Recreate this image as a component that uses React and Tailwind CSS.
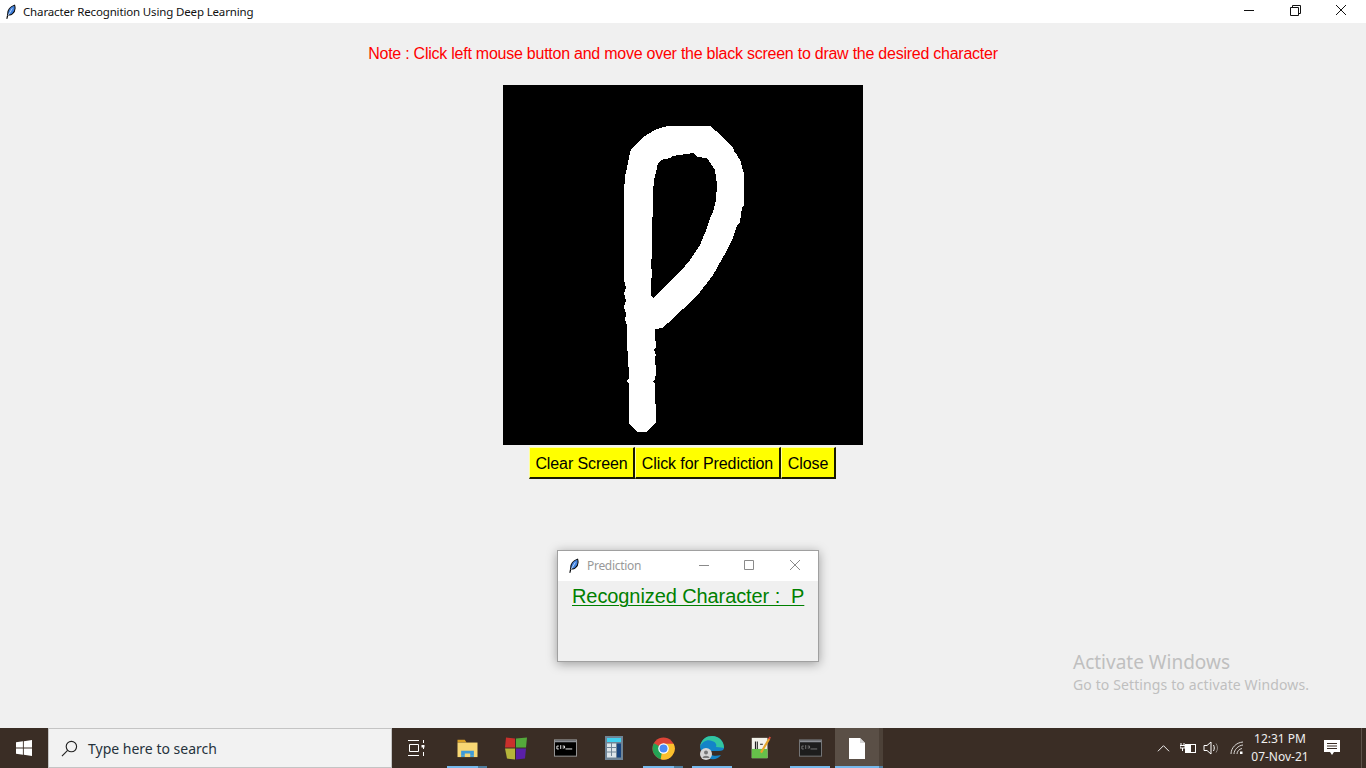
import React from "react";

const Feather = ({ className }) => (
  <svg viewBox="0 0 12 16" className={className}>
    <path d="M2 15.5 L3 10 C3 6 5.5 2 10.5 0.5 C11.5 4 10.5 8 8 10 C6.5 11.2 5 11.5 3.2 11 Z" fill="#3f80dc" stroke="#000" strokeWidth="1.1" />
    <path d="M3.2 12 L8 4" stroke="#d4e6ff" strokeWidth="0.9" fill="none" />
  </svg>
);

const Stroke = () => (
  <svg viewBox="0 0 360 360" className="block w-[360px] h-[360px]" shapeRendering="crispEdges">
    <path
      fillRule="evenodd"
      fill="#fff"
      transform="translate(-503 -85)"
      d="M663 127 L668 126 L710 126 L716 131 L733 147 L735 153 L737 155 L741 162 L742 167 L744 173 L744 205 L742 208 L740 222 L737 226 L733 238 L726 252 L713 275 L697 296 L668 323 L662 328 L655 329 L655 335 L656 347 L654 349 L656 355 L655 358 L656 372 L655 380 L653 381 L655 384 L656 422 L647 432 L637 432 L629 423 L629 384 L627 381 L629 378 L628 355 L627 347 L627 325 L625 320 L626 314 L624 307 L626 301 L624 293 L626 288 L624 280 L624 192 L625 176 L627 168 L630 152 L632 148 L643 137 L655 130 Z
      M658 163 L661 160 L670 158 L672 156 L693 153 L697 157 L707 158 L711 164 L715 170 L717 185 L716 200 L713 212 L711 216 L707 228 L700 245 L690 260 L680 272 L653 298 L651 295 L651 281 L652 276 L651 262 L652 256 L652 222 L653 212 L653 192 L654 180 L656 172 Z"
    />
  </svg>
);

const Explorer = () => (
  <svg viewBox="0 0 24 22" className="w-[23px] h-[20px]">
    <path d="M1 2 H9 L11 5 H1 Z" fill="#d9a126" />
    <path d="M1 5 H23 V21 H1 Z" fill="#f7d774" />
    <path d="M5 19 V14 H19 V19 H15 V17 H9 V19 Z" fill="#3e9bd9" />
    <path d="M5 19 H9 V21 H5 Z M15 19 H19 V21 H15 Z" fill="#3e9bd9" />
  </svg>
);

const Store = () => (
  <svg viewBox="0 0 24 24" className="w-[24px] h-[25px]">
    <path d="M2 1 L11 2 L11 11 L1 11 Z" fill="#c9302c" />
    <path d="M12 2 L23 1 L22 11 L12 11 Z" fill="#54a83c" />
    <path d="M1 12 L11 12 L11 23 L3 22 Z" fill="#b5b53a" />
    <path d="M12 12 L22 12 L21 22 L12 23 Z" fill="#5a20a8" />
  </svg>
);

const Cmd = ({ dim }) => (
  <svg viewBox="0 0 24 18" className="w-[23px] h-[18px]">
    <rect x="0.5" y="0.5" width="23" height="17" fill={dim ? "#1d1d1d" : "#000"} stroke={dim ? "#77787a" : "#9a9a9a"} />
    <rect x="1" y="1" width="22" height="2" fill="#8d9096" />
    <path d="M3 7 H5 M3 7 V10 H5 M7 6 V10 M9 7 H11 V9 H9" stroke={dim ? "#777" : "#eee"} strokeWidth="1" fill="none" />
    <path d="M12 10 H19" stroke={dim ? "#777" : "#eee"} strokeWidth="1" />
  </svg>
);

const Calc = () => (
  <svg viewBox="0 0 18 24" className="w-[18px] h-[24px]">
    <rect width="18" height="24" fill="#6f8496" />
    <rect x="2" y="2" width="14" height="4" fill="#42d0f0" />
    {[7.5, 12, 16.5].map((y) =>
      [2, 7].map((x) => <rect key={`${x}-${y}`} x={x} y={y} width="4" height="3.5" fill="#dde5ea" />)
    )}
    <rect x="12" y="7.5" width="4" height="14" fill="#17447f" />
    <rect x="2" y="20" width="9" height="1.5" fill="#dde5ea" />
  </svg>
);

const Chrome = () => (
  <svg viewBox="0 0 24 24" className="w-[23px] h-[23px]">
    <circle cx="12" cy="12" r="11.5" fill="#dc4437" />
    <path d="M12 12 L2 6.5 A11.5 11.5 0 0 0 9 23.1 Z" fill="#23a455" />
    <path d="M12 7 H22.6 A11.5 11.5 0 0 1 9 23.1 Z" fill="#fbc02d" />
    <circle cx="12" cy="12" r="5.5" fill="#fff" />
    <circle cx="12" cy="12" r="4.2" fill="#4b8bf5" />
  </svg>
);

const Edge = () => (
  <svg viewBox="0 0 26 26" className="w-[26px] h-[26px]">
    <path d="M1 12 C2 4 8 1 13 1 C20 1 25 6 25 13 C25 15 23 16 20 16 H10 C10 20 15 22 22 20 C19 24 15 25 12 24 C6 23 2 18 1 12 Z" fill="#1384c8" />
    <path d="M1 12 C3 6 9 4 13 6 C17 7 18 10 17 12 C21 12 24 13 25 13 C25 6 20 1 13 1 C8 1 2 4 1 12 Z" fill="#32c6a0" />
    <circle cx="7" cy="19" r="6" fill="#d5d5d5" />
    <circle cx="7" cy="17.5" r="2" fill="#777" />
    <path d="M3.5 23 C4 20 10 20 10.5 23 Z" fill="#777" />
  </svg>
);

const Notepad = () => (
  <svg viewBox="0 0 22 26" className="w-[22px] h-[24px]">
    <rect x="1" y="2" width="17" height="22" fill="#f2f2ea" />
    <rect x="1" y="14" width="17" height="10" fill="#66c04a" />
    <path d="M5 6 V14 M7 6 V14 M10 9 H13" stroke="#222" strokeWidth="1.2" />
    <path d="M11 18 L20 3" stroke="#e6a52a" strokeWidth="2.4" />
    <path d="M19.5 3.5 L21 1" stroke="#d8483a" strokeWidth="2" />
  </svg>
);

const Doc = () => (
  <svg viewBox="0 0 16 21" className="w-[16px] h-[21px]">
    <path d="M0 0 H11 L16 5 V21 H0 Z" fill="#fff" />
    <path d="M11 0 V5 H16" fill="#d8d8d8" />
  </svg>
);

const slots = [
  { el: <Explorer />, line: "w-[31px]", extra: "w-[9px]" },
  { el: <Store /> },
  { el: <Cmd /> },
  { el: <Calc /> },
  { el: <Chrome />, line: "w-[31px]", extra: "w-[9px]" },
  { el: <Edge />, line: "w-[40px]" },
  { el: <Notepad /> },
  { el: <Cmd dim />, line: "w-[40px]" },
];

const btn = "bg-[#ffff00] pt-[2px] tracking-[-0.1px] border-t border-l border-r-2 border-b-2 border-t-[#ffffa0] border-l-[#ffffa0] border-r-[#1a1a00] border-b-[#1a1a00]";

export default function App() {
  return (
    <div className="relative flex flex-col w-[1366px] h-[768px] overflow-hidden bg-[#f0f0f0] font-['Liberation_Sans',sans-serif]">
      {/* Title bar */}
      <div className="flex items-center h-[23px] bg-white shrink-0">
        <Feather className="w-[11px] h-[16px] ml-[5px] mr-[7px]" />
        <span className="text-[11.5px] tracking-[-0.15px] text-[#111] font-['Noto_Sans',sans-serif]">Character Recognition Using Deep Learning</span>
        <div className="ml-auto mr-[2px] flex items-center h-full">
          <svg viewBox="0 0 46 23" className="w-[46px] h-[23px]"><path d="M0 10.5 H10" transform="translate(18 0)" stroke="#111" /></svg>
          <svg viewBox="0 0 46 23" className="w-[46px] h-[23px]" fill="none" stroke="#111"><path d="M18.5 7.5 H26.5 V15.5 H18.5 Z M20.5 7 V5.5 H28.5 V13.5 H27" /></svg>
          <svg viewBox="0 0 46 23" className="w-[46px] h-[23px]" fill="none" stroke="#111"><path d="M18 5 L28 15 M28 5 L18 15" /></svg>
        </div>
      </div>

      {/* Main */}
      <div className="flex-1 flex flex-col items-center bg-[#f0f0f0]">
        <p className="mt-[21px] h-[19px] leading-[19px] text-[16px] tracking-[-0.245px] text-[#ff0000]">
          Note : Click left mouse button and move over the black screen to draw the desired character
        </p>
        <div className="mt-[22px] w-[360px] h-[360px] bg-black">
          <Stroke />
        </div>
        <div className="mt-[2px] -ml-px flex h-[32px] text-[16px] text-black">
          <button className={`w-[106px] ${btn}`}>Clear Screen</button>
          <button className={`w-[146px] ${btn}`}>Click for Prediction</button>
          <button className={`w-[55px] ${btn}`}>Close</button>
        </div>
      </div>

      {/* Prediction window */}
      <div className="absolute left-[557px] top-[550px] w-[262px] h-[112px] border border-[#a0a0a0] bg-[#f0f0f0] shadow-[0_2px_10px_rgba(0,0,0,0.35)]">
        <div className="flex items-center h-[30px] bg-white">
          <Feather className="w-[11px] h-[16px] ml-[10px] mr-[8px]" />
          <span className="text-[12px] tracking-[-0.3px] text-[#999] font-['Noto_Sans',sans-serif]">Prediction</span>
          <div className="ml-auto flex items-center">
            <svg viewBox="0 0 46 30" className="w-[46px] h-[30px]" fill="none" stroke="#8a8a8a"><path d="M19 14.5 H29" /></svg>
            <svg viewBox="0 0 46 30" className="w-[46px] h-[30px]" fill="none" stroke="#8a8a8a"><path d="M18.5 9.5 H27.5 V18.5 H18.5 Z" /></svg>
            <svg viewBox="0 0 46 30" className="w-[46px] h-[30px]" fill="none" stroke="#8a8a8a"><path d="M18 9 L28 19 M28 9 L18 19" /></svg>
          </div>
        </div>
        <div className="ml-[14px] mt-[4px] w-[232px] text-center text-[20px] tracking-[-0.09px] leading-[23px] text-[#008000] underline underline-offset-[2px] decoration-[1px] whitespace-pre">Recognized Character :  P</div>
      </div>

      {/* Watermark */}
      <div className="absolute left-[1073px] top-[650px] text-[#bfbfbf] font-['Noto_Sans',sans-serif]">
        <div className="text-[19px] leading-[24px]">Activate Windows</div>
        <div className="text-[14px] tracking-[0.12px] leading-[20px] mt-[1px]">Go to Settings to activate Windows.</div>
      </div>

      {/* Taskbar */}
      <div className="flex items-stretch h-[40px] bg-[#3a2d25] shrink-0 font-['Noto_Sans',sans-serif]">
        <div className="flex items-center justify-center w-[48px]">
          <svg viewBox="0 0 16 16" className="w-[16px] h-[16px]" fill="#fff">
            <path d="M0 2.3 L6.9 1.3 V7.5 H0 Z M7.8 1.2 L16 0 V7.5 H7.8 Z M0 8.4 H6.9 V14.7 L0 13.7 Z M7.8 8.4 H16 V16 L7.8 14.8 Z" />
          </svg>
        </div>
        <div className="flex items-center w-[344px] bg-[#f2f2f2] border border-[#c4c4c4]">
          <svg viewBox="0 0 18 18" className="w-[17px] h-[17px] ml-[12px]" fill="none" stroke="#222" strokeWidth="1.2">
            <circle cx="11" cy="7" r="5.5" />
            <path d="M7 11 L1 17" />
          </svg>
          <span className="ml-[10px] text-[14px] text-[#26323c]">Type here to search</span>
        </div>
        <div className="flex items-center justify-center w-[49px] pr-[1px]">
          <svg viewBox="0 0 17 16" className="w-[17px] h-[16px]" fill="none" stroke="#fff">
            <path d="M0 .5 H11 M0 15.5 H11 M1.5 4.5 H10.5 V11.5 H1.5 Z M15.5 0 V3 M15.5 6 V9 M15.5 12 V16" />
            <rect x="13.5" y="5" width="3" height="2.5" fill="#fff" stroke="none" />
          </svg>
        </div>
        {slots.map((s, i) => (
          <div key={i} className="relative flex items-center justify-center w-[49px] pl-[3px]">
            {s.el}
            {s.line && (
              <div className="absolute bottom-0 left-[6px] flex h-[2px]">
                <div className={`${s.line} bg-[#76b9ed]`} />
                {s.extra && <div className={`${s.extra} bg-[#4f7e9f]`} />}
              </div>
            )}
          </div>
        ))}
        <div className="relative flex items-center justify-center w-[44px] bg-[#5a4f46] ml-[2px]">
          <Doc />
          <div className="absolute bottom-0 left-0 w-[44px] h-[2px] bg-[#76b9ed]" />
        </div>
        <div className="relative w-[4px] bg-[#4c4138]">
          <div className="absolute bottom-0 left-0 w-[4px] h-[2px] bg-[#4f7e9f]" />
        </div>

        <div className="ml-auto flex items-center text-white">
          <svg viewBox="0 0 14 8" className="w-[13px] h-[8px] mr-[10px]" fill="none" stroke="#fff"><path d="M1 7.5 L7 1.5 L13 7.5" /></svg>
          <svg viewBox="0 0 17 12" className="w-[17px] h-[12px] mr-[6px]" fill="none" stroke="#fff">
            <path d="M1 1 V3 M4 1 V3 M0 3.5 H5 V6 H0 Z M2.5 6 V9" />
            <rect x="5.5" y="2.5" width="10" height="8" />
            <rect x="6" y="3" width="5" height="7" fill="#fff" stroke="none" />
          </svg>
          <svg viewBox="0 0 17 14" className="w-[17px] h-[14px] mr-[10px]" fill="none" stroke="#fff">
            <path d="M1 4.5 H4 L8 1 V13 L4 9.5 H1 Z" />
            <path d="M10.5 4 C11.5 6 11.5 8 10.5 10" />
            <path d="M13 2.5 C15 5.5 15 8.5 13 11.5" stroke="#8d8782" />
          </svg>
          <svg viewBox="0 0 14 14" className="w-[14px] h-[14px] mr-[6px]" fill="none" stroke="#d9d7d5">
            <path d="M1 13 C1 7 6 1.5 13 1" />
            <path d="M4 13 C4 9 8 4.5 13 4" />
            <path d="M7 13 C7 10.5 9 8 12 7.5" />
            <rect x="10" y="10.5" width="2.5" height="2.5" fill="#fff" stroke="none" />
          </svg>
          <div className="flex flex-col items-center w-[60px] text-[12px] leading-[18px] text-[#efefef]">
            <span>12:31 PM</span>
            <span>07-Nov-21</span>
          </div>
          <svg viewBox="0 0 16 16" className="w-[16px] h-[16px] ml-[14px] mr-[21px]" fill="#fff">
            <path d="M0 0 H16 V12 H10 L8 15 L6 12 H0 Z" />
            <path d="M3 3.5 H13 M3 6 H13 M3 8.5 H13" stroke="#3a2d25" />
          </svg>
          <div className="w-px h-full bg-[#5e534b]" />
          <div className="w-[4px]" />
        </div>
      </div>
    </div>
  );
}
